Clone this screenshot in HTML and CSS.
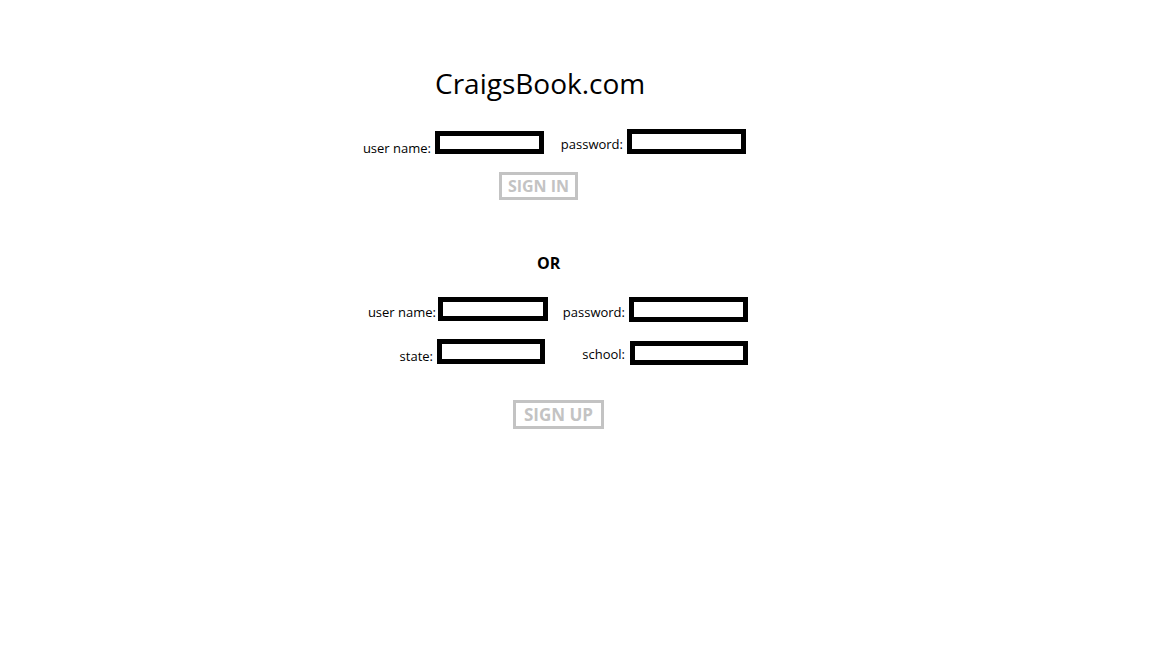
FILE: index.html
```html
<!DOCTYPE html>
<html lang="en">
<head>
<meta charset="utf-8">
<title>CraigsBook.com</title>
<link rel="stylesheet" href="styles.css">
</head>
<body>
<main class="page">
  <h1 class="title">CraigsBook.com</h1>

  <form class="signin">
    <div class="row row-a">
      <label class="lbl a-l1">user name:</label><input class="box a-b1" type="text">
      <label class="lbl a-l2">password:</label><input class="box a-b2" type="password">
    </div>
    <div class="btn-row"><button type="button" class="btn btn-in">SIGN IN</button></div>
  </form>

  <div class="or">OR</div>

  <form class="signup">
    <div class="row row-b">
      <label class="lbl b-l1">user name:</label><input class="box b-b1" type="text">
      <label class="lbl b-l2">password:</label><input class="box b-b2" type="password">
    </div>
    <div class="row row-c">
      <label class="lbl c-l1">state:</label><input class="box c-b1" type="text">
      <label class="lbl c-l2">school:</label><input class="box c-b2" type="text">
    </div>
    <div class="btn-row"><button type="button" class="btn btn-up">SIGN UP</button></div>
  </form>
</main>
</body>
</html>
```

FILE: styles.css
```css
html, body {
  margin: 0;
  padding: 0;
  background: #ffffff;
}
body {
  font-family: "Open Sans", "Noto Sans", sans-serif;
  color: #000;
  width: 1152px;
  height: 648px;
  overflow: hidden;
}
.page {
  display: flex;
  flex-direction: column;
  align-items: flex-start;
}
.title {
  margin: 65px 0 0 435px;
  font-size: 28px;
  font-weight: 400;
  line-height: 37px;
}
form {
  margin: 0;
  display: flex;
  flex-direction: column;
  align-items: flex-start;
}
.row {
  display: flex;
  align-items: flex-start;
  padding-left: 340px;
}
.lbl {
  font-size: 13px;
  line-height: 16px;
  text-align: right;
  white-space: nowrap;
}
.box {
  box-sizing: border-box;
  border: 5px solid #000;
  background: #fff;
  padding: 0;
  margin: 0;
  outline: none;
  font: inherit;
}

/* sign in row */
.row-a { margin-top: 27px; }
.a-l1 { width: 91px; margin-top: 11px; }
.a-b1 { margin: 2px 0 0 4px; width: 109px; height: 23px; }
.a-l2 { width: 79px; margin-top: 7px; }
.a-b2 { margin: 0 0 0 4px; width: 119px; height: 25px; }

/* sign up rows */
.row-b { margin-top: 24px; }
.b-l1 { width: 96px; margin-top: 7px; }
.b-b1 { margin: 0 0 0 2px; width: 110px; height: 24px; }
.b-l2 { width: 77px; margin-top: 7px; }
.b-b2 { margin: 0 0 0 4px; width: 119px; height: 25px; }

.row-c { margin-top: 17px; }
.c-l1 { width: 93px; margin-top: 9px; }
.c-b1 { margin: 0 0 0 4px; width: 108px; height: 25px; }
.c-l2 { width: 80px; margin-top: 7px; }
.c-b2 { margin: 2px 0 0 5px; width: 118px; height: 24px; }

.btn-row { display: flex; }
.btn {
  box-sizing: border-box;
  border: 3px solid #c3c3c3;
  background: #fff;
  color: #c3c3c3;
  font-family: "Open Sans", "Noto Sans", sans-serif;
  font-weight: 700;
  padding: 0;
  text-align: center;
  white-space: nowrap;
}
.btn-in {
  margin: 16px 0 0 499px;
  width: 79px;
  height: 28px;
  font-size: 16px;
  line-height: 22px;
}
.btn-up {
  margin: 35px 0 0 513px;
  width: 91px;
  height: 29px;
  font-size: 17px;
  line-height: 23px;
}

.or {
  margin: 53px 0 0 537px;
  font-size: 16px;
  font-weight: 700;
  line-height: 20px;
}
```
